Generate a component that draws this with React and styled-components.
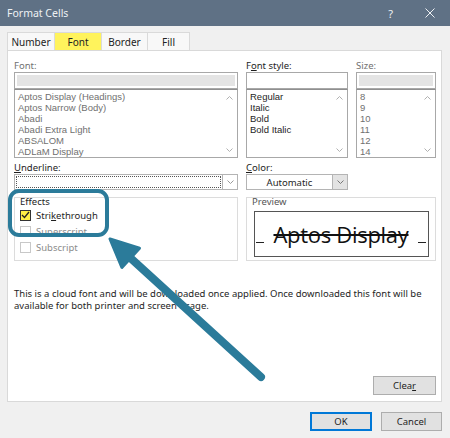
import React from "react";
import styled, { createGlobalStyle } from "styled-components";

const GlobalStyle = createGlobalStyle`
  html, body {
    margin: 0;
    padding: 0;
    background: #f0f0f0;
  }
  body {
    font-family: "Noto Sans", "Open Sans", sans-serif;
  }
`;

const Dialog = styled.div`
  position: relative;
  width: 450px;
  height: 438px;
  background: #f0f0f0;
  display: flex;
  flex-direction: column;
  overflow: hidden;
  font-size: 9.5px;
  color: #1e1e1e;
`;

const TitleBar = styled.div`
  height: 26px;
  flex: none;
  background: #5f7185;
  display: flex;
  align-items: center;
  justify-content: space-between;
  padding: 0 15px 0 7px;
  color: #eef1f4;
  font-size: 10.5px;
`;

const TitleButtons = styled.div`
  display: flex;
  align-items: center;
  gap: 32px;
  font-size: 11px;
`;

const Body = styled.div`
  flex: 1;
  display: flex;
  flex-direction: column;
  padding: 6px 8px 0 7px;
`;

const Tabs = styled.div`
  display: flex;
  height: 18px;
  padding-left: 1px;
`;

const Tab = styled.div`
  width: ${(p) => p.$w}px;
  box-sizing: border-box;
  border: 1px solid #dadada;
  border-bottom: none;
  margin-left: -1px;
  background: ${(p) => (p.$active ? "#fff35c" : "#f8f8f8")};
  display: flex;
  align-items: center;
  justify-content: center;
  font-size: 10px;
  color: #222;
`;

const Panel = styled.div`
  height: 352px;
  box-sizing: border-box;
  border: 1px solid #d9d9d9;
  background: #fff;
  padding: 8px 5px 6px 6px;
  display: flex;
  flex-direction: column;
`;

const Grid = styled.div`
  display: grid;
  grid-template-columns: ${(p) => p.$cols || "224px 102px 80px"};
  column-gap: 8px;
  margin-top: ${(p) => p.$mt || 0}px;
`;

const Column = styled.div`
  display: flex;
  flex-direction: column;
`;

const Label = styled.div`
  height: 13px;
  line-height: 13px;
  color: ${(p) => (p.$dim ? "#707070" : "#1e1e1e")};

  u {
    text-underline-offset: 1px;
  }
`;

const Input = styled.div`
  height: 17px;
  box-sizing: border-box;
  border: 1px solid #a8a8a8;
  background: #fff;
  padding: 2px;

  &::after {
    content: "";
    display: ${(p) => (p.$filled ? "block" : "none")};
    height: 100%;
    background: #e4e4e4;
  }
`;

const List = styled.div`
  position: relative;
  height: 69px;
  box-sizing: border-box;
  border: 1px solid #a8a8a8;
  border-top-color: #8f8f8f;
  padding: 1px 3px 0;
  display: flex;
  flex-direction: column;
  overflow: hidden;
`;

const ListItem = styled.div`
  height: 11px;
  line-height: 11px;
  font-family: "Liberation Sans", Arial, sans-serif;
  font-size: 9.5px;
  white-space: nowrap;
  color: ${(p) => (p.$dim ? "#707070" : "#1e1e1e")};
`;

const Scroll = styled.svg`
  position: absolute;
  right: 4px;
  ${(p) => (p.$down ? "bottom: 5px;" : "top: 6px;")}
  width: 7px;
  height: 4px;
`;

const Dropdown = styled.div`
  height: 16px;
  box-sizing: border-box;
  border: 1px solid #b4b4b4;
  display: flex;
`;

const DropValue = styled.div`
  flex: 1;
  box-sizing: border-box;
  margin: 1px;
  border: ${(p) => (p.$focus ? "1px dotted #555" : "none")};
  display: flex;
  align-items: center;
  justify-content: center;
  color: #1e1e1e;
`;

const DropButton = styled.div`
  width: 14px;
  border-left: 1px solid #b4b4b4;
  background: ${(p) => (p.$grey ? "#e3e3e3" : "#fff")};
  display: flex;
  align-items: center;
  justify-content: center;
`;

const GroupBox = styled.div`
  height: 64px;
  box-sizing: border-box;
  border: 1px solid #dcdcdc;
  padding: 0 5px;
  display: flex;
  flex-direction: column;
`;

const GroupTitle = styled.div`
  margin-top: -2px;
  height: 11px;
  line-height: 11px;
  color: ${(p) => (p.$dim ? "#555" : "#1e1e1e")};
`;

const CheckRow = styled.div`
  height: 16px;
  display: flex;
  align-items: center;
  gap: 5px;
  color: ${(p) => (p.$disabled ? "#8c8c8c" : "#1e1e1e")};

  &:first-of-type {
    margin-top: 2px;
  }
`;

const Box = styled.div`
  width: 11px;
  height: 11px;
  box-sizing: border-box;
  border: 1px solid ${(p) => (p.$checked ? "#333" : "#c8c8c8")};
  background: ${(p) => (p.$checked ? "#fff046" : "#fff")};
  display: flex;
  align-items: center;
  justify-content: center;
`;

const PreviewBox = styled.div`
  margin: 4px 0 0 2px;
  width: 175px;
  height: 46px;
  box-sizing: border-box;
  border: 1px solid #555;
  display: grid;
  grid-template-columns: 9px 1fr 10px;
  align-items: center;
`;

const Dash = styled.div`
  align-self: end;
  margin-bottom: 13px;
  margin-left: ${(p) => (p.$right ? "0" : "1px")};
  width: 8px;
  border-top: 1px solid #222;
`;

const PreviewText = styled.div`
  text-align: center;
  font-family: "Open Sans", "Noto Sans", sans-serif;
  font-size: 22px;
  line-height: 26px;
  color: #111;
  text-decoration: line-through;
  text-decoration-thickness: 1.5px;
  letter-spacing: -0.3px;
`;

const Note = styled.div`
  margin-top: 27px;
  line-height: 12px;
  color: #1e1e1e;
`;

const Button = styled.div`
  width: ${(p) => p.$w}px;
  height: 19px;
  box-sizing: border-box;
  background: #e1e1e1;
  border: ${(p) => (p.$primary ? "2px solid #0078d7" : "1px solid #adadad")};
  display: flex;
  align-items: center;
  justify-content: center;
  color: #1e1e1e;
`;

const PanelFooter = styled.div`
  margin-top: auto;
  display: flex;
  justify-content: flex-end;
`;

const Footer = styled.div`
  display: flex;
  justify-content: flex-end;
  gap: 9px;
  padding-top: 10px;
`;

const Overlay = styled.svg`
  position: absolute;
  left: 0;
  top: 0;
  width: 450px;
  height: 438px;
  pointer-events: none;
`;

const Chevron = ({ color = "#9a9a9a" }) => (
  <svg width="7" height="4" viewBox="0 0 7 4">
    <polyline points="0.5,0.5 3.5,3.5 6.5,0.5" fill="none" stroke={color} strokeWidth="1" />
  </svg>
);

const ScrollArrows = () => (
  <>
    <Scroll viewBox="0 0 7 4">
      <polyline points="0.5,3.5 3.5,0.5 6.5,3.5" fill="none" stroke="#b0b0b0" />
    </Scroll>
    <Scroll $down viewBox="0 0 7 4">
      <polyline points="0.5,0.5 3.5,3.5 6.5,0.5" fill="none" stroke="#b0b0b0" />
    </Scroll>
  </>
);

const fonts = [
  "Aptos Display (Headings)",
  "Aptos Narrow (Body)",
  "Abadi",
  "Abadi Extra Light",
  "ABSALOM",
  "ADLaM Display",
];
const styles = ["Regular", "Italic", "Bold", "Bold Italic"];
const sizes = ["8", "9", "10", "11", "12", "14"];

const App = () => {
  return (
    <Dialog>
      <GlobalStyle />
      <TitleBar>
        <span>Format Cells</span>
        <TitleButtons>
          <span>?</span>
          <svg width="10" height="10" viewBox="0 0 10 10">
            <path d="M0.5 0.5 L9.5 9.5 M9.5 0.5 L0.5 9.5" stroke="#eef1f4" strokeWidth="1" />
          </svg>
        </TitleButtons>
      </TitleBar>

      <Body>
        <Tabs>
          <Tab $w={48}>Number</Tab>
          <Tab $w={48} $active>Font</Tab>
          <Tab $w={47}>Border</Tab>
          <Tab $w={43}>Fill</Tab>
        </Tabs>

        <Panel>
          <Grid>
            <Column>
              <Label $dim>Font:</Label>
              <Input $filled />
              <List>
                {fonts.map((f) => (
                  <ListItem key={f} $dim>{f}</ListItem>
                ))}
                <ScrollArrows />
              </List>
            </Column>
            <Column>
              <Label>
                F<u>o</u>nt style:
              </Label>
              <Input />
              <List>
                {styles.map((s) => (
                  <ListItem key={s}>{s}</ListItem>
                ))}
                <ScrollArrows />
              </List>
            </Column>
            <Column>
              <Label $dim>Size:</Label>
              <Input $filled />
              <List>
                {sizes.map((s) => (
                  <ListItem key={s} $dim>{s}</ListItem>
                ))}
                <ScrollArrows />
              </List>
            </Column>
          </Grid>

          <Grid $mt={3}>
            <Column>
              <Label>
                <u>U</u>nderline:
              </Label>
              <Dropdown>
                <DropValue $focus />
                <DropButton>
                  <Chevron />
                </DropButton>
              </Dropdown>
            </Column>
            <Column>
              <Label>
                <u>C</u>olor:
              </Label>
              <Dropdown>
                <DropValue>Automatic</DropValue>
                <DropButton $grey>
                  <Chevron color="#777" />
                </DropButton>
              </Dropdown>
            </Column>
          </Grid>

          <Grid $mt={7} $cols="224px 190px">
            <GroupBox>
              <GroupTitle>Effects</GroupTitle>
              <CheckRow>
                <Box $checked>
                  <svg width="9" height="8" viewBox="0 0 9 8">
                    <polyline points="1,4 3.5,6.5 8,1" fill="none" stroke="#222" strokeWidth="1.3" />
                  </svg>
                </Box>
                <span>
                  Stri<u>k</u>ethrough
                </span>
              </CheckRow>
              <CheckRow $disabled>
                <Box />
                <span>Superscript</span>
              </CheckRow>
              <CheckRow $disabled>
                <Box />
                <span>Subscript</span>
              </CheckRow>
            </GroupBox>
            <GroupBox>
              <GroupTitle $dim>Preview</GroupTitle>
              <PreviewBox>
                <Dash />
                <PreviewText>Aptos Display</PreviewText>
                <Dash $right />
              </PreviewBox>
            </GroupBox>
          </Grid>

          <Note>
            This is a cloud font and will be downloaded once applied. Once downloaded this font will be
            <br />
            available for both printer and screen usage.
          </Note>

          <PanelFooter>
            <Button $w={63}>
              <span>
                Clea<u>r</u>
              </span>
            </Button>
          </PanelFooter>
        </Panel>

        <Footer>
          <Button $w={62} $primary>OK</Button>
          <Button $w={61}>Cancel</Button>
        </Footer>
      </Body>

      <Overlay viewBox="0 0 450 438">
        <rect x="10" y="191" width="97" height="44" rx="9" fill="none" stroke="#2b7b9a" strokeWidth="4" />
        <line x1="261" y1="377" x2="125" y2="253" stroke="#2b7b9a" strokeWidth="8" strokeLinecap="round" />
        <polygon
          points="110,239 139.5,248.3 121.9,267.5"
          fill="#2b7b9a"
          stroke="#2b7b9a"
          strokeWidth="3"
          strokeLinejoin="round"
        />
      </Overlay>
    </Dialog>
  );
};

export default App;
